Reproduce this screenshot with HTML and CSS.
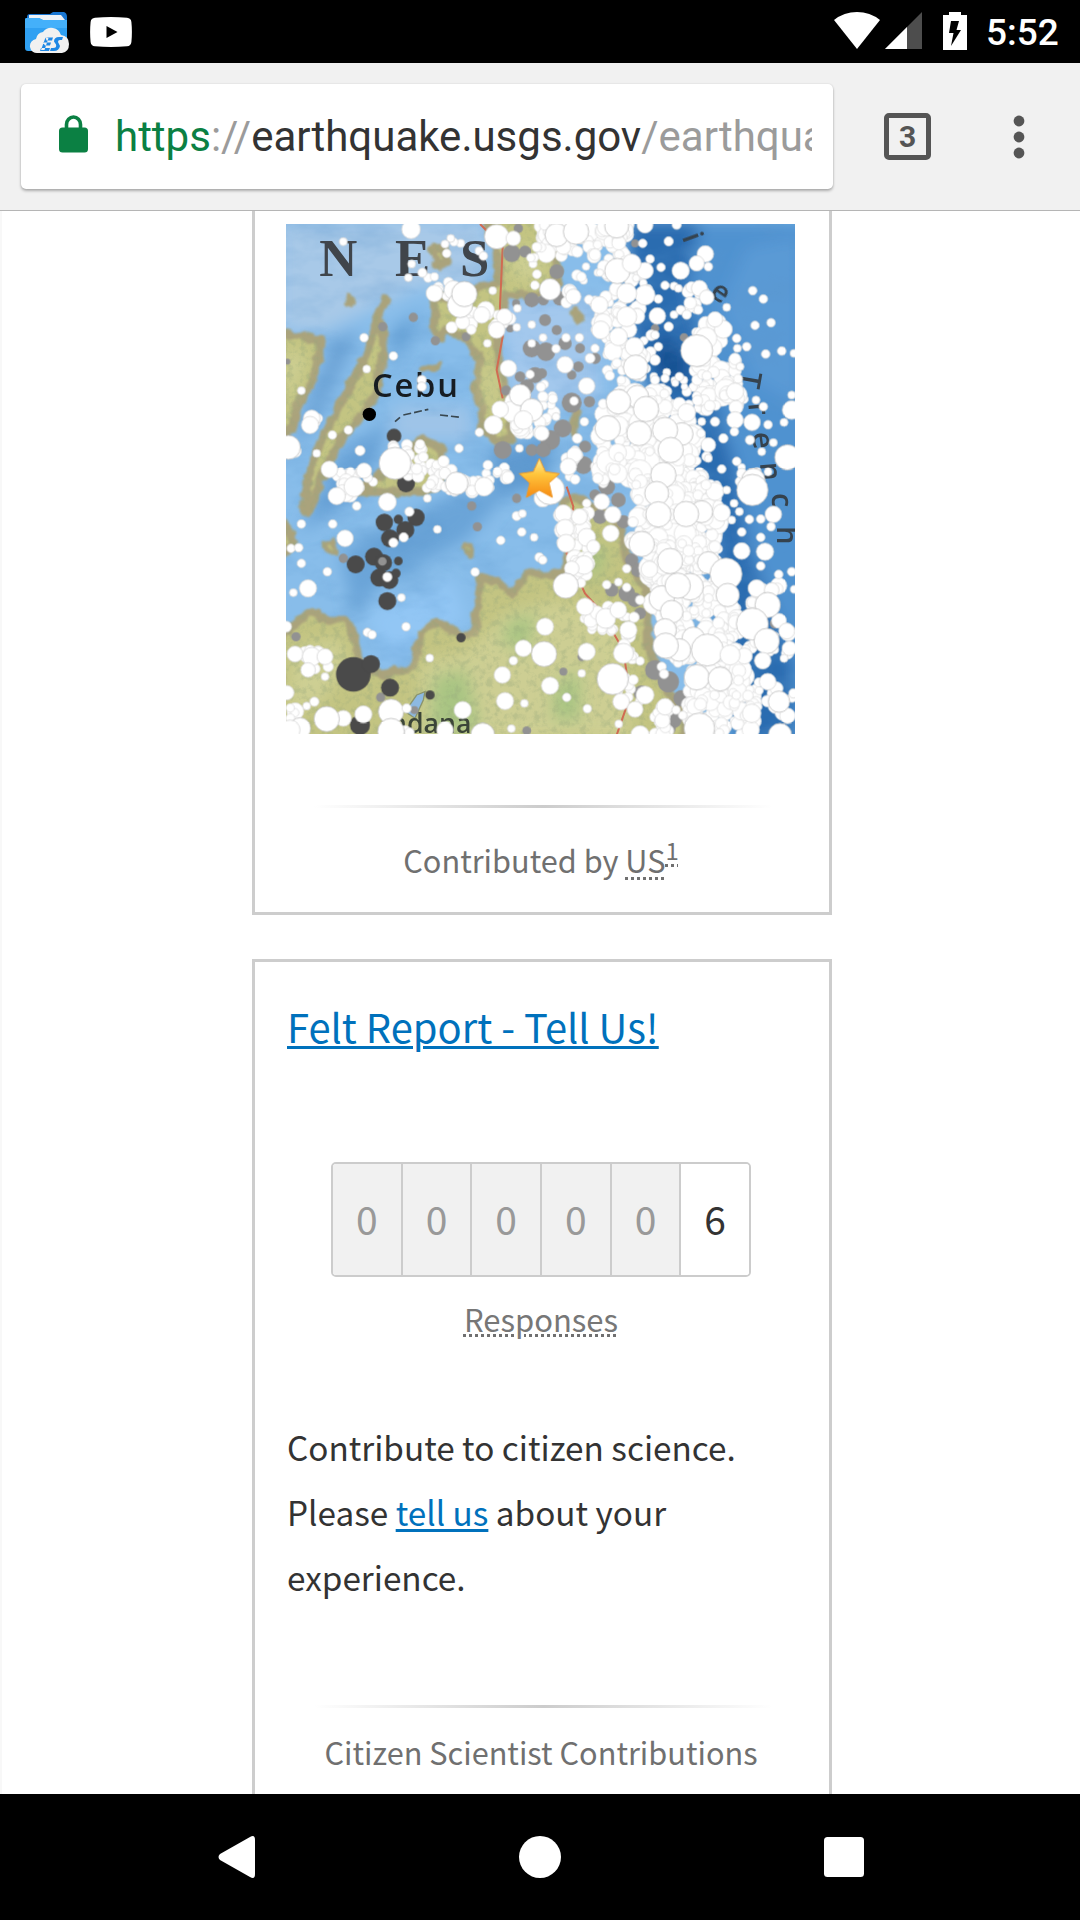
FILE: index.html
```html
<!DOCTYPE html>
<html lang="en">
<head>
<meta charset="utf-8">
<title>USGS Earthquake</title>
<link rel="stylesheet" href="styles.css">
</head>
<body>
<header class="status">
  <div class="notifications">
    <svg class="es" width="45" height="42" viewBox="0 0 45 42">
      <path d="M2 5Q2 2 5 2H25L28 0H39Q42 1 42 5V20H2Z" fill="#1976d2"/>
      <path d="M4 3H36L40 8H4Z" fill="#eef2f7"/>
      <path d="M0 7Q0 6 2 6H14L18 8H42V35L37 39H3Q0 39 0 36Z" fill="#2fa0f2"/>
      <path d="M0 9Q0 6 2 6H14L18 8H42V16H0Z" fill="#44b0fa"/>
      <path d="M13 41A7 7 0 0 1 11 27Q12 21 18 20Q22 15 28 16Q34 17 36 23Q44 24 44 32Q44 40 37 41Z" fill="#f1f1f1"/>
      <path d="M20.500 25.500H28L27 28.500H21.500ZM18 30.500H26L25 33.500H20ZM16 36H25L24 39H15ZM20.500 25.500L16 38H19.500L23.500 26ZM38 25H34Q29 25 29 29.500L31 32.500Q32 36 28 36H26L25 39H29Q34 39 35 34L33 30Q33 28 35 28H37Z" fill="#1e88e5"/>
    </svg>
    <svg class="yt" width="42" height="30" viewBox="0 0 42 30">
      <path d="M5 .7Q21-.5 37 .7Q41 1 41.4 5Q42.4 15 41.4 25Q41 29 37 29.3Q21 30.500 5 29.300Q1 29 .6 25Q-.4 15 .6 5Q1 1 5 .7Z" fill="#fff"/>
      <path d="M16.500 9L27.500 15L16.500 21Z"/>
    </svg>
  </div>
  <div class="system">
    <svg width="46" height="37" viewBox="0 0 46 37"><path d="M0 8Q10 0 23 0T46 8L23 37Z" fill="#fff"/></svg>
    <svg class="signal" width="37" height="37" viewBox="0 0 37 37"><path d="M37 0V37H0Z" fill="#4d4d4d"/><path d="M22 15V37H0Z" fill="#fff"/></svg>
    <svg class="battery" width="24" height="38" viewBox="0 0 24 38"><path d="M0 3H6V0H18V3H24V38H0Z" fill="#fff"/><path d="M8 9H16L13.500 18H18L8 34L10.500 21H6Z"/></svg>
    <span class="clock">5:52</span>
  </div>
</header>
<div class="toolbar">
  <div class="omnibox">
    <svg width="29" height="38" viewBox="0 0 29 38"><path d="M7.500 14V9.500A7 7.500 0 0 1 21.500 9.500V14" fill="none" stroke="#0b8043" stroke-width="3.600"/><rect y="12.500" width="29" height="25" rx="3.500" fill="#0b8043"/></svg>
    <div class="url"><span class="secure">https</span><span class="dim">://</span>earthquake.usgs.gov<span class="dim">/earthquakes</span></div>
  </div>
  <div class="tabs">3</div>
  <svg class="more" width="12" height="44" viewBox="0 0 12 44"><g fill="#555"><circle cx="6" cy="6" r="5.400"/><circle cx="6" cy="22" r="5.400"/><circle cx="6" cy="38" r="5.400"/></g></svg>
</div>
<main class="page">
  <section class="card map-card">
    <svg id="map" class="map" viewBox="18 12 1527 1530" preserveAspectRatio="none">
      <defs>
        <filter id="b40" x="-50%" y="-50%" width="200%" height="200%"><feGaussianBlur stdDeviation="24"/></filter>
        <filter id="coast" x="-5%" y="-5%" width="110%" height="110%"><feTurbulence type="fractalNoise" baseFrequency=".03" numOctaves="3" seed="3" result="n"/><feDisplacementMap in="SourceGraphic" in2="n" scale="26" xChannelSelector="R" yChannelSelector="G"/><feGaussianBlur stdDeviation="2.500"/></filter>
        <filter id="soft"><feGaussianBlur stdDeviation="1.600"/></filter>
        <filter id="grain" x="0" y="0" width="100%" height="100%"><feTurbulence type="fractalNoise" baseFrequency=".05" numOctaves="4" seed="4"/><feColorMatrix values="0 0 0 0 .3  0 0 0 0 .38  0 0 0 0 .2  3.500 0 0 0 -1.600"/><feComposite in2="SourceGraphic" operator="in"/></filter>
        <filter id="relief" x="0" y="0" width="100%" height="100%"><feTurbulence type="fractalNoise" baseFrequency=".006 .012" numOctaves="4" seed="8"/><feColorMatrix values="0 0 0 0 .1  0 0 0 0 .3  0 0 0 0 .6  2 0 0 0 -.9"/></filter>
        <linearGradient id="starFill" x2="0" y2="1"><stop offset="0" stop-color="#fff0a0"/><stop offset=".4" stop-color="#ffc63d"/><stop offset="1" stop-color="#f78a12"/></linearGradient>
      </defs>
      <rect width="1560" height="1560" fill="#88bdea"/>
      <g filter="url(#b40)">
        <path d="M0 0H620V200H420L250 280L120 340L0 330Z" fill="#a8c9e8"/>
        <path d="M650 230H960V560H700Z" fill="#a3c8ed"/>
        <path d="M340 560H570V660H340Z" fill="#9fc4e8"/>
        <path d="M160 360L240 330L90 640L40 680Z" fill="#6ba1d4"/>
        <path d="M340 330L430 270L380 360L330 440Z" fill="#5f9bd2"/>
        <path d="M180 700L330 600L250 820L60 940Z" fill="#68a1d6"/>
        <path d="M180 1000L500 830L700 800L560 960L300 1100L220 1180Z" fill="#6aa4d8"/>
        <path d="M640 700L820 640L800 800L640 830Z" fill="#5f9ad0"/>
        <path d="M250 1180L520 1080L560 1200L330 1340Z" fill="#92c6f4"/>
        <path d="M1020 0H1600V1600H1340L1280 1100L1150 600Z" fill="#4f92d0"/>
        <path d="M1050 0H1260L1220 200L1290 480L1370 760L1400 960L1540 1330V1560H1380L1300 900L1120 560L1040 300Z" fill="#2a6cb0"/>
        <path d="M1140 340L1220 400L1210 520L1120 440Z" fill="#134f91"/>
        <path d="M1400 80L1560 50V560L1420 480L1320 260Z" fill="#5a9ad5"/>
      </g>
      <rect width="1560" height="1560" filter="url(#relief)" opacity=".35"/>
      <g id="land" fill="#c3c482" stroke="#aaa37c" stroke-width="26" stroke-linejoin="round" filter="url(#coast)">
        <path d="M0 338L125 362L112 430L85 510L54 550L38 625L0 640Z"/>
        <path d="M0 900L30 940L40 970L0 1020Z"/>
        <path d="M315 240L293 300L308 340L312 420L298 440L290 520L230 600L190 650L150 720L120 790L90 870L72 880L84 780L110 690L160 590L210 500L250 420L285 330Z"/>
        <path d="M230 815L270 790L370 710L420 660L485 680L488 760L470 800L430 815Z"/>
        <path d="M455 85L490 85L508 125L475 135ZM465 220L520 245L600 200L660 185L650 90L615 0H830V200L760 225L675 225L650 380L668 490L690 560L695 660L645 660L603 620L612 560L585 500L602 420L560 360L500 330L482 355L462 330Z"/>
        <path d="M205 225L218 245L210 255ZM130 970L160 965L172 1000L155 1000ZM552 970L575 980L573 1005L548 985ZM430 445L480 440L460 448Z" stroke-width="14"/>
        <path d="M0 1250L90 1175L150 1202L202 1200L232 1280L240 1350L310 1364L402 1340L422 1240L470 1203L540 1244L584 1245L602 1075L650 1084L700 1123L745 1055L785 1068L858 1062L870 960L850 850L880 830L950 860L1020 910L1045 1030L1100 1110L1105 1280L1155 1400L1215 1480V1600H0Z"/>
        <path d="M870 620L892 570L882 640ZM880 270L910 290L890 300Z" stroke-width="18"/>
      </g>
      <g fill="#cfd095" filter="url(#b40)" opacity=".9"><path d="M420 1330L560 1290L680 1180L820 1140L1000 1180L1050 1400L1050 1560H420Z"/><path d="M40 1290L180 1250L200 1340L120 1450L20 1500Z"/><path d="M10 390L80 400L50 500L10 560ZM690 90L780 80L780 190L700 170ZM610 430L640 440L650 580L620 560Z"/></g>
      <g fill="#a9c583" filter="url(#b40)"><path d="M460 1370L560 1350L600 1540H450ZM690 1200L770 1180L740 1300L660 1260ZM900 990L980 980L950 1100ZM820 1400L900 1350V1500H820Z"/></g>
      <use href="#land" filter="url(#grain)" opacity=".3"/>
      <path d="M600 12L668 80L660 260L668 350L650 450L668 535M860 800L880 860L860 1000L915 1120L960 1170L1030 1290L1050 1430L1010 1545" fill="none" stroke="#d06b52" stroke-width="6"/>
      <path d="M410 1425L435 1415L430 1440L405 1495L375 1475Z" fill="#8db9e2" stroke="#8a946e" stroke-width="4"/>
      <g filter="url(#soft)">
        <g class="map-sea"><text x="118" y="168">N</text><text x="345" y="168">E</text><text x="540" y="168">S</text></g>
        <text class="map-city" x="276" y="530" textLength="258">Cebu</text>
        <circle cx="268" cy="583" r="20"/>
        <path d="M345 605L360 592M370 585L445 568M480 585L540 592" stroke="#39464f" stroke-width="5" stroke-dasharray="24 9"/>
        <g class="map-trench"><text transform="translate(1205 50) rotate(70)">i</text><text transform="translate(1285 225) rotate(35)">e</text><text transform="translate(1385 450) rotate(100)">T</text><text transform="translate(1405 550) rotate(85)">r</text><text transform="translate(1415 640) rotate(82)">e</text><text transform="translate(1440 728) rotate(86)">n</text><text transform="translate(1475 820) rotate(88)">c</text><text transform="translate(1490 918) rotate(90)">h</text></g>
        <text class="map-region" x="330" y="1540">ndana</text>
      </g>
      <g id="quakes"></g>
      <path d="M778 715L796 755L838 761L807 789L817 832L778 811L739 832L749 789L718 761L760 755Z" fill="url(#starFill)" stroke="#ef9a2b" stroke-width="3" stroke-linejoin="round"/>
    </svg>
    <hr class="rule">
    <p class="credit">Contributed by <abbr>US</abbr><sup><abbr>1</abbr></sup></p>
  </section>
  <section class="card felt">
    <h2><a>Felt Report - Tell Us!</a></h2>
    <div class="counter"><span>0</span><span>0</span><span>0</span><span>0</span><span>0</span><span class="on">6</span></div>
    <p class="label"><abbr>Responses</abbr></p>
    <p class="copy">Contribute to citizen science. Please <a>tell us</a> about your experience.</p>
    <hr class="rule">
    <p class="credit last">Citizen Scientist Contributions</p>
  </section>
</main>
<nav class="nav">
  <svg width="37" height="42" viewBox="0 0 37 42"><path d="M32 1Q37-2 37 4V38Q37 44 32 41L2 24Q-1 21 2 18Z" fill="#fff"/></svg>
  <svg width="42" height="42" viewBox="0 0 42 42"><circle cx="21" cy="21" r="21" fill="#fff"/></svg>
  <svg width="40" height="40" viewBox="0 0 40 40"><rect width="40" height="40" rx="3.500" fill="#fff"/></svg>
</nav>
<script src="quakes.js"></script>
</body>
</html>
```

FILE: styles.css
```css
* { box-sizing: border-box; }
body { margin: 0; width: 1080px; height: 1920px; overflow: hidden; display: flex; flex-direction: column; background: #fff; font-family: "Noto Sans CJK SC", "Noto Sans", sans-serif; color: #333; }
svg { display: block; flex: none; }
h2, p { margin: 0; font-weight: 400; }

.status { flex: none; height: 63px; background: #000; display: flex; justify-content: space-between; padding: 12px 22px 0 25px; }
.notifications, .system { display: flex; align-items: flex-start; }
.yt { margin: 5px 0 0 20px; }
.signal { margin-left: 5px; }
.battery { margin-left: 21px; }
.clock { margin-left: 19px; color: #fff; font: 500 37px/42px Roboto, sans-serif; width: 72px; }

.toolbar { flex: none; height: 148px; background: #f1f1f1; border-bottom: 1px solid #b5b5b5; display: flex; align-items: flex-start; padding: 21px 0 0 21px; }
.omnibox { width: 812px; height: 105px; background: #fff; border-radius: 5px; box-shadow: 0 2px 3px rgba(0,0,0,.28), 0 0 2px rgba(0,0,0,.12); display: flex; align-items: center; padding: 0 21px 0 38px; }
.omnibox svg { margin-top: -6px; }
.url { margin-left: 27px; flex: 1; min-width: 0; overflow: hidden; white-space: nowrap; font: 42px/60px Roboto, sans-serif; }
.secure { color: #0b8043; }
.dim { color: #9b9b9b; }
.tabs { width: 47px; height: 47px; margin: 29px 0 0 51px; border: 5px solid #555; border-radius: 5px; color: #555; font: 700 30px/37px Roboto, sans-serif; text-align: center; }
.more { margin: 31px 0 0 82px; }

.page { flex: 1; min-height: 0; overflow: hidden; display: flex; flex-direction: column; align-items: center; gap: 44px; border-left: 2px solid #f8f8f8; }
.card { flex: none; width: 580px; margin-left: 2px; border: 3px solid #cdcdcd; padding: 0 32px 0 32px; }
.map-card { height: 704px; border-top: 0; padding-top: 13px; }
.map { width: 509px; height: 510px; margin-left: -1px; }
.rule { height: 3px; width: 458px; border: 0; margin: 71px auto 0 27px; background: linear-gradient(90deg, transparent, #ccc 50%, transparent); }
.credit { margin: 25px 2px 0 0; text-align: center; font-size: 30.7px; line-height: 54px; color: #707070; white-space: nowrap; }
.credit sup { font-size: 24px; line-height: 0; vertical-align: 13px; }
abbr { text-decoration: underline dotted #707070 3px; text-underline-offset: 4px; }
a { color: #0071bc; text-decoration: underline 3px; text-underline-offset: 3px; }

.felt { height: 900px; padding-top: 32px; }
.felt h2 { font-size: 39.9px; line-height: 64px; }
.counter { display: flex; width: 420px; height: 115px; margin: 104px 0 0 44px; border: 2.6px solid #ccc; border-radius: 5px; overflow: hidden; }
.counter span { flex: 1; background: #f1f1f1; color: #999; font-size: 39px; line-height: 109px; text-align: center; border-left: 2px solid #ccc; }
.counter span:first-child { border-left: 0; }
.counter .on { background: #fff; color: #333; }
.label { margin: 15px 2px 0 0; text-align: center; font-size: 31px; line-height: 54px; color: #777; }
.label abbr { text-underline-offset: 2px; }
.copy { margin-top: 67.5px; font-size: 33.3px; line-height: 65.4px; }
.felt .rule { margin-top: 95px; }
.credit.last { margin-top: 17px; }

.nav { flex: none; height: 126px; background: #000; display: flex; justify-content: space-between; align-items: center; padding: 0 216px 0 218px; }

.map-sea text { font: 700 158px "Liberation Serif", serif; fill: #3f454b; }
.map-city { font: 600 98px "Open Sans", sans-serif; fill: #161d20; }
.map-trench text { font: 600 88px "Open Sans", sans-serif; fill: #35424e; }
.map-region { font: 600 80px "Open Sans", sans-serif; fill: #3b4437; }
```

FILE: quakes.js
```js
// Epicentres on the map: [x, y, radius] in map units, one list per tile.
const layer = document.getElementById('quakes');
const NS = 'http://www.w3.org/2000/svg';
function dot(x, y, r, fill, edge, width) {
  const c = document.createElementNS(NS, 'circle');
  c.setAttribute('cx', x); c.setAttribute('cy', y); c.setAttribute('r', r);
  c.setAttribute('fill', fill);
  c.setAttribute('stroke', edge);
  c.setAttribute('stroke-width', width);
  layer.appendChild(c);
}
let seed = 77;
function rnd() { seed = (seed * 16807) % 2147483647; return seed / 2147483647; }
const tiles = { a: [0, 0], b: [780, 0], c: [0, 780], d: [780, 780] };
function plot(tile, list, fill, edge) {
  const [ox, oy] = tiles[tile];
  list.forEach(([x, y, r]) => dot(x + ox, y + oy, r, fill, edge || (r > 30 ? '#bdbdbd' : '#d6d6d6'), edge ? 0 : 2.4));
}
// Random small events inside a box: x0, y0, x1, y1, count, min radius, max radius.
function scatter(tile, boxes) {
  const [ox, oy] = tiles[tile];
  boxes.forEach(([x0, y0, x1, y1, n, lo, hi]) => {
    for (let i = 0; i < n * .85; i++) dot(ox + x0 + rnd() * (x1 - x0), oy + y0 + rnd() * (y1 - y0), lo + 1 + rnd() * rnd() * (hi - lo), '#fff', '#dedede', 2.4);
  });
}
const gray = '#929292', dark = '#4a4a4a';
plot('a', [[715,25,14],[695,100,26],[735,95,18],[400,292,14],[308,320,14],[466,362,14],[558,350,13],[755,240,22],[708,250,12],[755,385,27],[765,465,24],[720,470,16],[678,512,15],[668,690,27],[755,690,18],[22,425,9],[740,500,22],[690,325,12]], gray, gray);
plot('b', [[50,155,22],[285,70,12],[15,300,18],[50,330,15],[75,370,20],[18,395,28],[120,385,15],[115,440,16],[165,415,17],[95,465,14],[5,460,16],[95,548,30],[148,545,17],[68,625,27],[30,660,30],[10,690,22],[130,735,27],[135,680,18],[245,385,13],[345,325,13],[432,352,13],[10,240,16],[60,235,22]], gray, gray);
plot('c', [[575,78,14],[592,140,14],[710,55,14],[190,235,14],[48,470,14],[302,652,14],[403,690,12],[740,752,13]], gray, gray);
plot('d', [[200,20,25],[180,110,22],[235,60,22],[250,125,20],[275,240,20],[295,270,22],[260,340,25],[215,330,20],[285,360,22],[300,400,18],[345,570,30],[385,605,32],[425,655,25],[460,690,22],[400,720,25],[385,745,22],[425,432,14],[705,430,16],[70,575,12],[165,45,17],[305,640,24],[125,530,13]], gray, gray);
plot('a', [[342,648,22]], dark, dark);
plot('c', [[378,10,27],[313,127,26],[408,112,26],[376,150,27],[330,175,27],[355,118,14],[282,230,27],[227,253,27],[310,248,26],[355,243,13],[298,293,27],[328,300,27],[348,280,14],[322,363,27],[220,583,52],[273,552,27],[330,623,27],[543,473,14],[450,645,14],[240,735,30]], dark, dark);
plot('c', [[307,244,13]], gray, gray);

scatter('b', [[0,12,265,60,60,14,34],[0,60,265,110,38,11,30],[100,115,310,190,26,10,24],[75,200,330,250,24,11,30],[165,265,300,330,28,12,32],[185,345,340,415,24,11,28],[200,420,350,490,18,10,28],[465,300,545,420,28,12,34],[455,410,595,520,52,12,34],[330,510,620,570,50,12,34],[180,520,380,620,45,12,38],[175,600,465,700,85,12,40],[165,690,500,790,100,12,38],[0,490,45,610,14,11,22],[75,650,120,780,16,12,24],[440,200,500,270,12,12,24],[390,480,440,500,4,9,12],[600,740,700,790,9,10,22]]);
scatter('d', [[285,0,535,110,105,12,38],[270,100,550,200,90,12,36],[315,190,535,310,90,12,38],[340,300,590,400,80,12,36],[360,390,600,480,68,12,36],[370,470,590,550,58,12,36],[445,560,620,640,55,12,36],[445,630,640,765,80,12,36],[345,670,385,765,22,12,28],[60,80,155,210,32,12,26],[90,230,145,310,16,12,28],[130,370,290,460,32,10,24],[225,460,280,540,16,10,28],[630,310,730,390,16,12,30],[610,420,750,530,16,11,28],[575,600,660,690,20,11,22],[680,620,765,710,9,12,26],[225,590,310,680,9,10,20]]);
scatter('a', [[440,170,520,230,9,11,18],[510,270,690,335,20,13,28],[690,540,780,640,26,14,32],[80,590,115,635,5,12,20],[310,670,430,770,26,13,28],[440,720,530,780,14,12,24],[18,660,60,710,6,12,22],[600,720,690,780,12,11,22],[170,750,280,790,10,12,24],[740,30,775,200,6,11,15],[490,60,640,135,4,11,13]]);
scatter('c', [[170,0,240,45,16,13,26],[440,0,630,35,30,13,28],[75,510,145,570,10,14,26],[28,670,60,770,5,11,26],[340,730,390,770,4,12,24]]);

plot('a', [[393,28,28],[650,50,37],[700,55,22],[190,65,12],[395,132,12],[385,173,12],[427,158,14],[500,100,13],[512,55,12],[495,72,12],[610,108,13],[638,212,12],[463,220,25],[520,210,28],[540,255,38],[553,222,38],[252,353,13],[340,408,13],[260,447,12],[64,512,12],[95,595,25],[90,615,26],[25,682,36],[157,645,13],[205,630,13],[110,700,12],[425,480,14],[425,500,14],[685,445,25],[710,322,12],[622,370,12],[605,285,25],[673,290,24],[650,330,25],[345,730,48],[148,748,25],[240,692,15],[252,752,23],[537,685,13],[598,637,13],[718,685,12],[660,568,25],[640,615,28],[720,525,32],[755,570,34],[730,600,28],[755,370,12],[755,314,12],[712,265,12],[750,463,13]], '#fff');
plot('b', [[50,45,35],[108,35,38],[230,18,36],[315,15,24],[410,14,14],[308,70,13],[386,64,14],[232,153,38],[315,152,25],[275,130,28],[330,117,13],[363,142,13],[422,152,26],[496,102,25],[470,130,23],[505,140,13],[30,208,32],[100,230,23],[178,255,26],[315,225,30],[260,220,30],[355,237,13],[375,196,13],[402,198,12],[415,205,12],[478,205,24],[638,212,13],[670,237,13],[352,288,25],[402,284,12],[422,270,14],[440,284,14],[386,320,14],[182,330,27],[260,290,30],[645,316,13],[693,308,13],[550,328,27],[525,298,23],[235,350,27],[283,380,28],[345,345,13],[355,380,13],[345,420,16],[590,355,13],[620,380,13],[592,385,12],[470,392,48],[677,402,13],[725,393,13],[762,400,12],[75,434,25],[78,353,13],[118,353,13],[48,386,13],[165,385,13],[150,415,15],[9,353,12],[287,442,37],[380,457,12],[375,475,13],[418,470,13],[345,480,14],[140,498,25],[600,440,12],[585,515,26],[102,543,13],[133,605,13],[48,590,12],[292,530,34],[235,545,37],[318,567,38],[440,578,27],[203,625,38],[297,640,37],[425,642,34],[375,630,38],[392,690,38],[5,640,22],[585,600,25],[636,607,25],[684,614,13],[670,560,13],[648,540,12],[525,605,14],[485,605,12],[483,640,13],[583,635,13],[550,655,14],[630,660,14],[755,570,28],[755,525,12],[732,607,12],[742,712,38],[505,675,22],[505,715,12],[590,724,13],[545,747,13],[700,668,12],[665,695,12],[370,765,38],[640,780,35],[85,740,25],[560,262,12],[500,232,22]], '#fff');
plot('c', [[170,48,26],[222,20,30],[230,78,13],[322,66,27],[530,10,34],[612,20,28],[388,95,14],[472,148,12],[64,132,13],[158,132,13],[195,175,25],[33,205,13],[56,203,13],[64,250,13],[142,275,13],[84,325,26],[40,338,12],[18,440,17],[340,188,14],[371,172,14],[322,291,14],[364,353,12],[378,440,13],[262,457,13],[276,464,13],[585,276,13],[662,181,13],[710,108,14],[727,101,12],[725,156,13],[762,172,12],[730,505,25],[700,542,13],[449,534,12],[667,585,25],[45,522,24],[95,530,28],[135,530,24],[84,570,22],[135,590,12],[20,638,22],[80,678,12],[103,665,14],[190,715,24],[548,690,26],[675,663,26],[733,670,12],[140,717,38],[250,703,26],[333,695,38],[60,745,32],[30,750,30],[333,755,40],[380,685,14],[495,750,25],[608,765,36],[694,746,12],[778,232,14],[442,55,12],[788,55,26],[810,30,44]], '#fff');
plot('d', [[185,65,24],[218,104,25],[212,160,25],[140,70,13],[70,100,26],[118,110,24],[75,145,27],[140,172,27],[160,200,20],[78,190,27],[132,255,28],[95,265,22],[77,317,38],[135,380,26],[8,240,13],[15,440,26],[12,522,38],[30,617,26],[80,652,13],[142,686,13],[125,580,12],[140,515,26],[197,415,30],[235,390,25],[265,450,26],[250,520,30],[218,597,47],[243,665,25],[285,688,24],[315,645,27],[300,543,13],[260,322,13],[200,314,13],[235,306,12],[300,360,14],[260,266,13],[350,40,36],[355,103,38],[485,95,33],[438,102,38],[545,98,26],[305,192,38],[390,243,38],[505,248,33],[558,282,48],[328,268,25],[450,320,40],[365,355,38],[413,317,38],[563,345,35],[637,30,47],[700,103,25],[605,213,25],[675,215,26],[662,172,13],[662,258,13],[716,283,13],[755,275,13],[605,156,13],[628,118,13],[662,117,13],[693,140,13],[598,95,12],[560,30,12],[582,70,12],[575,120,12],[650,325,26],[695,330,22],[395,395,34],[375,450,34],[683,375,38],[637,432,48],[460,475,34],[680,483,38],[740,453,24],[748,505,22],[763,328,12],[732,535,12],[418,510,34],[377,497,38],[502,510,48],[613,528,24],[668,542,25],[570,525,30],[470,592,38],[540,597,36],[683,605,25],[717,665,32],[365,560,14],[372,582,14],[375,680,25],[478,745,46],[720,765,35],[635,700,28],[760,640,14],[236,732,12],[408,690,13],[428,706,13],[300,765,28]], '#fff');
```
